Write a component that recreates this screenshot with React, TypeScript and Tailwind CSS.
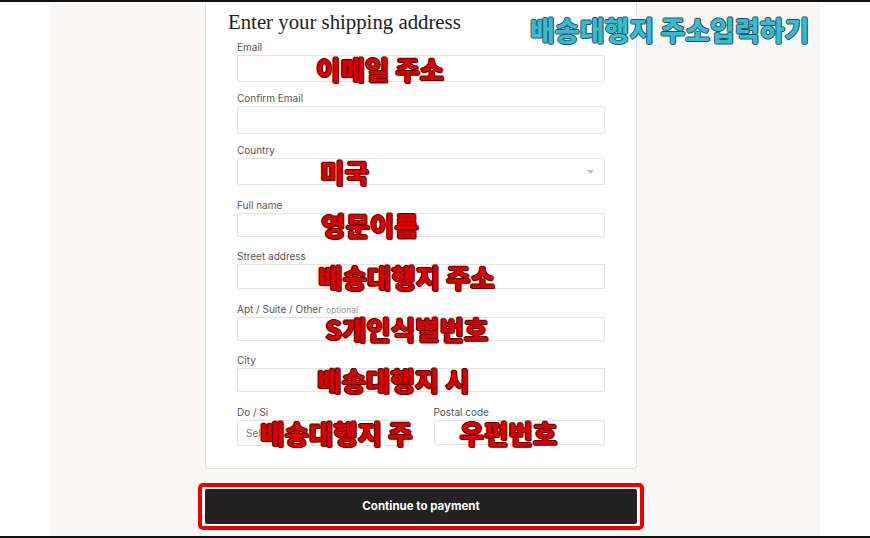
import React from "react"

type Field = {
  label: string
  optional?: boolean
  note: string
  noteLeft: string
  wrap: string
  box: string
  select?: boolean
}

const fields: Field[] = [
  { label: "Email", note: "이메일 주소", noteLeft: "left-[78px]", wrap: "mt-[9px]", box: "h-[27px]" },
  { label: "Confirm Email", note: "", noteLeft: "left-0", wrap: "mt-[10px]", box: "h-[28px]" },
  { label: "Country", note: "미국", noteLeft: "left-[82px]", wrap: "mt-[10px]", box: "h-[27px]", select: true },
  { label: "Full name", note: "영문이름", noteLeft: "left-[83px]", wrap: "mt-[14px]", box: "h-[24px]" },
  { label: "Street address", note: "배송대행지 주소", noteLeft: "left-[80px]", wrap: "mt-[13px]", box: "h-[25px]" },
  { label: "Apt / Suite / Other", optional: true, note: "S개인식별번호", noteLeft: "left-[87px]", wrap: "mt-[14px]", box: "h-[24px]" },
  { label: "City", note: "배송대행지 시", noteLeft: "left-[79px]", wrap: "mt-[13px]", box: "h-[24px]" },
]

const redNote =
  "pointer-events-none absolute top-1/2 -translate-y-1/2 whitespace-nowrap text-[26.5px] font-black leading-none text-[#d80000] [text-shadow:1px_0_0_#5a0000,-1px_0_0_#5a0000,0_1px_0_#5a0000,0_-1px_0_#5a0000,1px_1px_1px_#400]"

const sans = "font-['Inter','Liberation_Sans',sans-serif]"
const korean = "font-['Noto_Sans_CJK_KR',sans-serif]"

function Label({ text, optional }: { text: string; optional?: boolean }) {
  return (
    <div className={`h-[12px] text-[10px] leading-[12px] text-[#555] ${sans}`}>
      {text}
      {optional && <span className="ml-[4px] text-[8.5px] text-[#999]">optional</span>}
    </div>
  )
}

function InputRow({ f }: { f: Field }) {
  return (
    <div className={f.wrap}>
      <Label text={f.label} optional={f.optional} />
      <div className={`relative mt-[2px] ${f.box} rounded-[2px] border border-[#e2e2e2] bg-white`}>
        {f.select && (
          <svg className="absolute right-[10px] top-1/2 -translate-y-1/2" width="7" height="4" viewBox="0 0 7 4">
            <path d="M0 0h7L3.5 4z" fill="#b5b5b5" />
          </svg>
        )}
        {f.note && <span className={`${redNote} ${korean} ${f.noteLeft}`}>{f.note}</span>}
      </div>
    </div>
  )
}

export default function App() {
  return (
    <div className="flex h-[538px] w-[870px] flex-col overflow-hidden border-y-2 border-[#111] bg-white">
      <div className="flex flex-1">
        <div className="w-[50px] bg-white" />
        <div className="relative flex w-[770px] flex-col bg-[#f9f8f6]">
          {/* shipping form card */}
          <div className="ml-[155px] w-[432px] rounded-b-[4px] border-x border-b border-[#e6e4e0] bg-white pb-[22px] pl-[22px] pr-[31px]">
            <h2 className="mt-[7px] h-[23px] text-[20.8px] leading-[26px] text-[#222] font-['Liberation_Serif','DejaVu_Serif',serif]">
              Enter your shipping address
            </h2>
            <div className="ml-[9px]">
              {fields.map((f) => (
                <InputRow key={f.label} f={f} />
              ))}
              <div className="mt-[14px] grid grid-cols-2 gap-[25px]">
                <div>
                  <Label text="Do / Si" />
                  <div className="relative mt-[2px] flex h-[26px] items-center rounded-[2px] border border-[#e2e2e2] bg-white pl-[8px]">
                    <span className={`text-[10px] text-[#777] ${sans}`}>Select...</span>
                    <span className={`${redNote} ${korean} left-[22px]`}>배송대행지 주</span>
                  </div>
                </div>
                <div>
                  <Label text="Postal code" />
                  <div className="relative mt-[2px] h-[25px] rounded-[2px] border border-[#e2e2e2] bg-white">
                    <span className={`${redNote} ${korean} left-[25px]`}>우편번호</span>
                  </div>
                </div>
              </div>
            </div>
          </div>

          {/* continue button with highlight */}
          <div className="ml-[148px] mt-[14px] w-[446px] rounded-[5px] border-[4px] border-[#ee0000] bg-white px-[3px] py-[2px]">
            <button className={`flex h-[35px] w-full items-center justify-center rounded-[2px] bg-[#222] text-[11.5px] font-bold text-white ${sans}`}>
              Continue to payment
            </button>
          </div>

          <span
            className={`pointer-events-none absolute left-[480px] top-[14px] whitespace-nowrap text-[27px] font-black leading-none text-[#3cb9cc] ${korean} [text-shadow:1px_0_0_#175565,-1px_0_0_#175565,0_1px_0_#175565,0_-1px_0_#175565]`}
          >
            배송대행지 주소입력하기
          </span>
        </div>
        <div className="flex-1 bg-white" />
      </div>
    </div>
  )
}
